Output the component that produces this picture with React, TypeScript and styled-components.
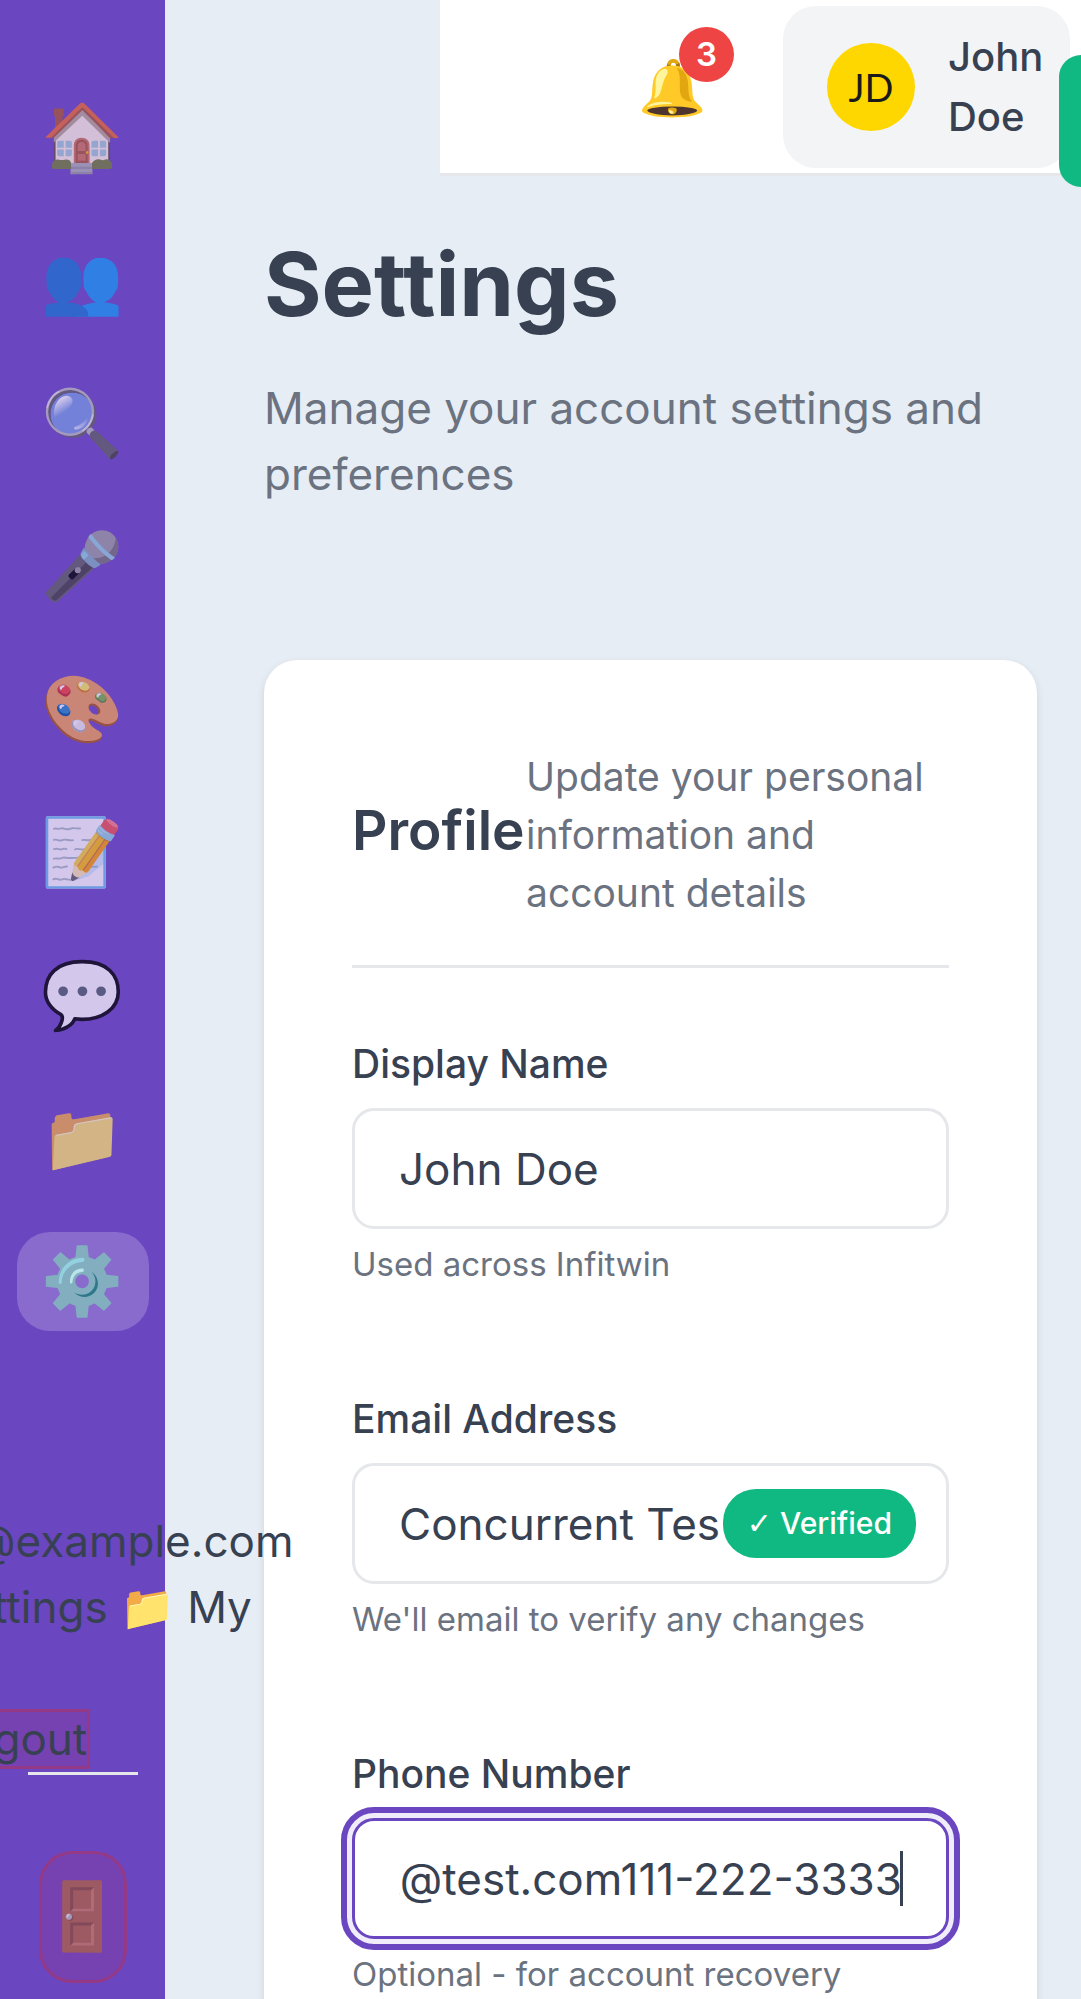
import React, { useEffect, useRef } from "react";
import styled, { createGlobalStyle, css } from "styled-components";

const GlobalStyle = createGlobalStyle`
  *, *::before, *::after { box-sizing: border-box; }
  body {
    margin: 0;
    background: #e6edf5;
    color: #374151;
    font-family: Inter, "Noto Color Emoji", "Liberation Sans", sans-serif;
    font-size: 44px;
    line-height: 66px;
  }
  h1, h2, p { margin: 0; }
  a { color: inherit; text-decoration: none; }
  button, input { font: inherit; color: inherit; }
`;

const Page = styled.div`
  display: flex;
  height: 100vh;
  overflow: hidden;
`;

const Sidebar = styled.aside`
  position: relative;
  z-index: 2;
  display: flex;
  flex-direction: column;
  align-items: center;
  flex: 0 0 165px;
  width: 165px;
  min-width: 0;
  padding-top: 88px;
  background: #6b46c1;
`;

const Nav = styled.nav`
  display: flex;
  flex-direction: column;
  gap: 44px;
`;

const NavIcon = styled.span<{ $active?: boolean }>`
  padding-bottom: 4px;
  font-size: 66px;
  line-height: 72px;
  opacity: ${(p) => (p.$active ? 1 : 0.7)};
`;

const NavLink = styled.a<{ $active?: boolean }>`
  display: flex;
  align-items: center;
  justify-content: center;
  width: 132px;
  height: 99px;
  border-radius: 33px;
  background: ${(p) => (p.$active ? "rgba(255, 255, 255, 0.2)" : "transparent")};
`;

const AccountMenu = styled.div`
  align-self: flex-start;
  display: flex;
  flex-direction: column;
  align-items: flex-start;
  margin: 177px 0 0 -128px;
  white-space: nowrap;
`;

const MenuLine = styled.div`
  min-height: 66px;
`;

const AccountEmail = styled(MenuLine)`
  padding-left: 12px;
`;

const LogoutLink = styled.a`
  border: 3px solid rgba(220, 38, 38, 0.3);
  background: rgba(220, 38, 38, 0.1);
`;

const SidebarRule = styled.hr`
  width: 110px;
  height: 3px;
  margin: 0 0 76px;
  border: 0;
  background: #e5e7eb;
`;

const ExitButton = styled.button`
  display: flex;
  align-items: center;
  justify-content: center;
  width: 88px;
  height: 132px;
  padding: 0;
  border: 3px solid rgba(220, 38, 38, 0.3);
  border-radius: 33px;
  background: rgba(220, 38, 38, 0.1);
`;

const Content = styled.div`
  flex: 1;
  min-width: 0;
  display: flex;
  flex-direction: column;
`;

const TopBar = styled.header`
  display: flex;
  align-items: center;
  justify-content: flex-end;
  gap: 70px;
  flex: 0 0 176px;
  margin-left: 275px;
  padding-right: 11px;
  border-bottom: 3px solid #e5e7eb;
  background: #fff;
`;

const BellButton = styled.button`
  position: relative;
  padding: 0 6px;
  border: 0;
  background: none;
  font-size: 55px;
  line-height: 60px;
`;

const Count = styled.span`
  position: absolute;
  top: -30px;
  right: -21px;
  width: 55px;
  height: 55px;
  border-radius: 50%;
  background: #ef4444;
  color: #fff;
  font-size: 33px;
  font-weight: 600;
  line-height: 55px;
  text-align: center;
`;

const UserButton = styled.button`
  display: flex;
  align-items: center;
  gap: 33px;
  width: 287px;
  padding: 21px 24px 21px 44px;
  border: 0;
  border-radius: 33px;
  background: #f3f4f6;
  font-size: 40px;
  font-weight: 500;
  line-height: 60px;
  text-align: left;
`;

const Avatar = styled.span`
  flex: none;
  width: 88px;
  height: 88px;
  border-radius: 50%;
  background: #ffd700;
  color: #1a1a1a;
  font-family: Lato, sans-serif;
  font-size: 38px;
  font-weight: 400;
  line-height: 88px;
  text-align: center;
`;

const Main = styled.main`
  flex: 1;
  min-height: 0;
  overflow-y: auto;
  scrollbar-width: none;
  padding: 55px 44px 99px 99px;
`;

const PageTitle = styled.h1`
  font-size: 88px;
  font-weight: 700;
  line-height: 106px;
`;

const PageIntro = styled.p`
  margin-top: 38px;
  color: #6b7280;
`;

const Card = styled.section`
  margin-top: 153px;
  padding: 88px;
  border-radius: 33px;
  background: #fff;
  box-shadow: 0 3px 8px rgba(0, 0, 0, 0.1);
`;

const CardHeader = styled.header`
  display: flex;
  align-items: center;
  justify-content: space-between;
  margin-bottom: 66px;
  padding-bottom: 43px;
  border-bottom: 3px solid #e5e7eb;
`;

const CardTitle = styled.h2`
  margin-bottom: 11px;
  font-size: 55px;
  font-weight: 600;
`;

const CardText = styled.p`
  width: 423px;
  color: #6b7280;
  font-size: 39px;
  line-height: 58px;
`;

const Field = styled.div`
  display: flex;
  flex-direction: column;
  margin-bottom: 100px;
`;

const Label = styled.label`
  margin-bottom: 14px;
  font-size: 39px;
  font-weight: 500;
  line-height: 60px;
`;

const InputWrap = styled.div`
  position: relative;
  display: flex;
`;

const Input = styled.input<{ $active?: boolean }>`
  flex: 1;
  min-width: 0;
  height: 121px;
  padding: 0 44px;
  border: 3px solid #e5e7eb;
  border-radius: 22px;
  background: #fff;
  outline: none;
  ${(p) =>
    p.$active &&
    css`
      border-color: #6b46c1;
      outline: 6px solid #6b46c1;
      outline-offset: 5px;
      box-shadow: 0 0 0 8px rgba(107, 70, 193, 0.1);
      caret-color: transparent;
    `}
`;

const Caret = styled.span`
  position: absolute;
  top: 33px;
  right: 46px;
  width: 3px;
  height: 55px;
  background: #374151;
`;

const Verified = styled.span`
  position: absolute;
  top: 26px;
  right: 33px;
  padding: 12px 24px;
  border-radius: 33px;
  background: #10b981;
  color: #fff;
  font-size: 30px;
  font-weight: 500;
  line-height: 45px;
`;

const Tick = styled.span`
  font-family: "DejaVu Sans", sans-serif;
`;

const Hint = styled.p`
  margin-top: 10px;
  color: #6b7280;
  font-size: 33px;
  line-height: 50px;
`;

const Toast = styled.div`
  position: fixed;
  top: 55px;
  right: 0;
  z-index: 3;
  width: 22px;
  height: 132px;
  border-radius: 22px 0 0 22px;
  background: #10b981;
`;

const links = [
  { icon: "🏠", label: "Home" },
  { icon: "👥", label: "People" },
  { icon: "🔍", label: "Search" },
  { icon: "🎤", label: "Record" },
  { icon: "🎨", label: "Design" },
  { icon: "📝", label: "Notes" },
  { icon: "💬", label: "Messages" },
  { icon: "📁", label: "Files" },
  { icon: "⚙️", label: "Settings", active: true },
];

export default function App() {
  const phone = useRef<HTMLInputElement>(null);

  useEffect(() => {
    const showEnd = () => {
      const el = phone.current;
      if (el) el.scrollLeft = el.scrollWidth;
    };
    showEnd();
    document.fonts.ready.then(showEnd);
  }, []);

  return (
    <Page>
      <GlobalStyle />
      <Sidebar>
        <Nav>
          {links.map((l) => (
            <NavLink key={l.label} href="#" aria-label={l.label} $active={l.active}>
              <NavIcon $active={l.active}>{l.icon}</NavIcon>
            </NavLink>
          ))}
        </Nav>
        <AccountMenu>
          <AccountEmail>john@example.com</AccountEmail>
          <MenuLine>⚙️ Settings 📁 My</MenuLine>
          <MenuLine />
          <MenuLine>
            <LogoutLink href="#">🚪 Logout</LogoutLink>
          </MenuLine>
        </AccountMenu>
        <SidebarRule />
        <ExitButton aria-label="Log out">
          <NavIcon>🚪</NavIcon>
        </ExitButton>
      </Sidebar>
      <Content>
        <TopBar>
          <BellButton aria-label="Notifications">
            🔔<Count>3</Count>
          </BellButton>
          <UserButton>
            <Avatar>JD</Avatar>
            <span>John Doe</span>
          </UserButton>
        </TopBar>
        <Main>
          <PageTitle>Settings</PageTitle>
          <PageIntro>Manage your account settings and preferences</PageIntro>
          <Card>
            <CardHeader>
              <CardTitle>Profile</CardTitle>
              <CardText>Update your personal information and account details</CardText>
            </CardHeader>
            <Field>
              <Label htmlFor="name">Display Name</Label>
              <InputWrap>
                <Input id="name" type="text" defaultValue="John Doe" />
              </InputWrap>
              <Hint>Used across Infitwin</Hint>
            </Field>
            <Field>
              <Label htmlFor="email">Email Address</Label>
              <InputWrap>
                <Input id="email" type="text" defaultValue="Concurrent Tes" />
                <Verified>
                  <Tick>✓</Tick> Verified
                </Verified>
              </InputWrap>
              <Hint>We'll email to verify any changes</Hint>
            </Field>
            <Field>
              <Label htmlFor="phone">Phone Number</Label>
              <InputWrap>
                <Input id="phone" ref={phone} type="text" defaultValue="concurrent@test.com111-222-3333" $active />
                <Caret />
              </InputWrap>
              <Hint>Optional - for account recovery</Hint>
            </Field>
          </Card>
        </Main>
      </Content>
      <Toast role="status" />
    </Page>
  );
}
